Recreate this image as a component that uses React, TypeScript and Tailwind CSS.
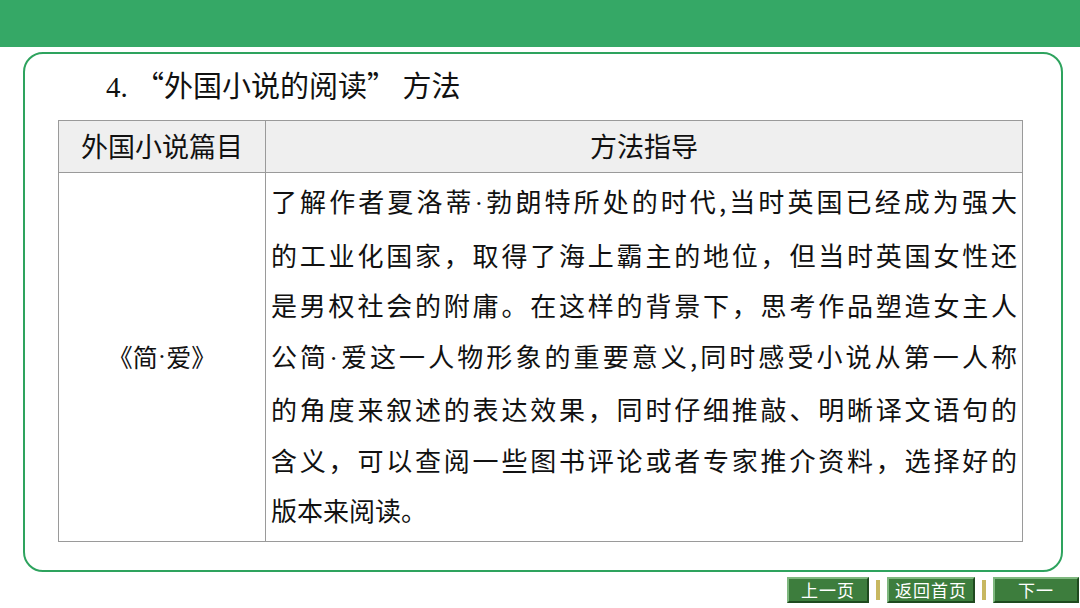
import React from 'react';

const Dot = () => <span style={{ fontFamily: '"Liberation Serif", serif' }}>·</span>;

const lines: React.ReactNode[] = [
  <>了解作者夏洛蒂<Dot />勃朗特所处的时代,当时英国已经成为强大</>,
  '的工业化国家，取得了海上霸主的地位，但当时英国女性还',
  '是男权社会的附庸。在这样的背景下，思考作品塑造女主人',
  <>公简<Dot />爱这一人物形象的重要意义,同时感受小说从第一人称</>,
  '的角度来叙述的表达效果，同时仔细推敲、明晰译文语句的',
  '含义，可以查阅一些图书评论或者专家推介资料，选择好的',
];

const NavButton = ({ label, w }: { label: string; w: string }) => (
  <div className={`${w} h-[26px] bg-[#3d7d3d] border-2 border-t-[#7fb87f] border-l-[#7fb87f] border-b-[#1f4a1f] border-r-[#1f4a1f] flex items-center justify-center text-white text-[17px] tracking-[1px]`}>
    {label}
  </div>
);

const App = () => {
  return (
    <div className="w-[1080px] h-[608px] bg-white overflow-hidden relative" style={{ fontFamily: '"Noto Sans CJK SC", sans-serif' }}>
      <div className="h-[47px] bg-[#35a866]" />
      <div className="ml-[23px] mr-[17px] mt-[5px] h-[520px] border-2 border-[#2ea35e] rounded-[20px] pt-[10px] pl-[33px]">
        <div className="pl-[48px] text-[29px] leading-[40px] text-[#111]">
          <span style={{ fontFamily: '"Liberation Serif", serif' }}>4. </span>“外国小说的阅读” 方法
        </div>
        <div className="mt-[13px] w-[965px] border border-[#9a9a9a] text-[#111]">
          <div className="flex h-[52px] bg-[#efefef] border-b border-[#9a9a9a] text-[27px]">
            <div className="w-[207px] border-r border-[#9a9a9a] flex items-center justify-center">外国小说篇目</div>
            <div className="flex-1 flex items-center justify-center">方法指导</div>
          </div>
          <div className="flex h-[368px]">
            <div className="w-[207px] border-r border-[#9a9a9a] flex items-center justify-center text-[25px]">《简<Dot />爱》</div>
            <div className="flex-1 pl-[5px] pr-[5px] pt-[3px] text-[26px] leading-[50.5px]">
              {lines.map((l, i) => (
                <div key={i} className="text-justify [text-align-last:justify] whitespace-nowrap">{l}</div>
              ))}
              <div>版本来阅读。</div>
            </div>
          </div>
        </div>
      </div>
      <div className="absolute left-[787px] top-[577px] flex items-center gap-[7px]">
        <NavButton label="上一页" w="w-[82px]" />
        <div className="w-[4px] h-[20px] bg-[#c8b860]" />
        <NavButton label="返回首页" w="w-[88px]" />
        <div className="w-[4px] h-[20px] bg-[#c8b860]" />
        <NavButton label="下一" w="w-[86px]" />
      </div>
    </div>
  );
};

export default App;
